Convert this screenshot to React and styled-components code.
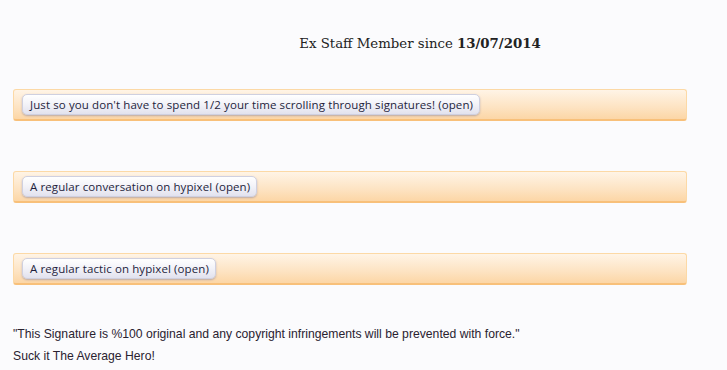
import React from "react";
import styled, { createGlobalStyle } from "styled-components";

const Global = createGlobalStyle`
  html, body { margin: 0; padding: 0; background: #fbfbfd; }
  body { width: 727px; height: 370px; overflow: hidden; }
`;

const Page = styled.div`
  display: flex;
  flex-direction: column;
  padding-top: 34px;
`;

const Header = styled.div`
  font-family: "DejaVu Serif", "Liberation Serif", serif;
  font-size: 13.3px;
  color: #222;
  text-align: center;
  padding-left: 113px;
  line-height: 20px;
  b { font-weight: bold; }
`;

const Spoilers = styled.div`
  display: flex;
  flex-direction: column;
  gap: 50px;
  margin: 35px 40px 0 13px;
`;

const SpoilerBar = styled.div`
  box-sizing: border-box;
  height: 32px;
  border: 1px solid #fcd9a6;
  border-bottom: 2px solid #f8c07a;
  border-radius: 3px;
  background: linear-gradient(to bottom, #fff4e6 0%, #fde3c2 60%, #fcd6a6 100%);
  padding: 4px 8px;
  display: flex;
  align-items: flex-start;
`;

const SpoilerButton = styled.div`
  box-sizing: border-box;
  height: 21px;
  padding: 0 6px 0 7px;
  display: flex;
  align-items: center;
  font-family: "Open Sans", "DejaVu Sans", sans-serif;
  font-size: 11.5px;
  letter-spacing: 0.1px;
  color: #1e1e3c;
  border: 1px solid #cfd0e0;
  border-radius: 5px;
  background: linear-gradient(to bottom, #ffffff 0%, #f2f2f8 50%, #e2e2ee 100%);
  box-shadow: 0 1px 2px rgba(110, 110, 150, 0.45);
  white-space: nowrap;
`;

const Quote = styled.div`
  margin: 38px 0 0 13px;
  font-family: "Liberation Sans", Arial, sans-serif;
  font-size: 12.2px;
  line-height: 22px;
  color: #2a2230;
`;

const spoilers = [
  "Just so you don't have to spend 1/2 your time scrolling through signatures! (open)",
  "A regular conversation on hypixel (open)",
  "A regular tactic on hypixel (open)",
];

export default function App() {
  return (
    <>
      <Global />
      <Page>
        <Header>
          Ex Staff Member since <b>13/07/2014</b>
        </Header>
        <Spoilers>
          {spoilers.map((s) => (
            <SpoilerBar key={s}>
              <SpoilerButton>{s}</SpoilerButton>
            </SpoilerBar>
          ))}
        </Spoilers>
        <Quote>
          "This Signature is %100 original and any copyright infringements will be prevented with force."
          <br />
          Suck it The Average Hero!
        </Quote>
      </Page>
    </>
  );
}
